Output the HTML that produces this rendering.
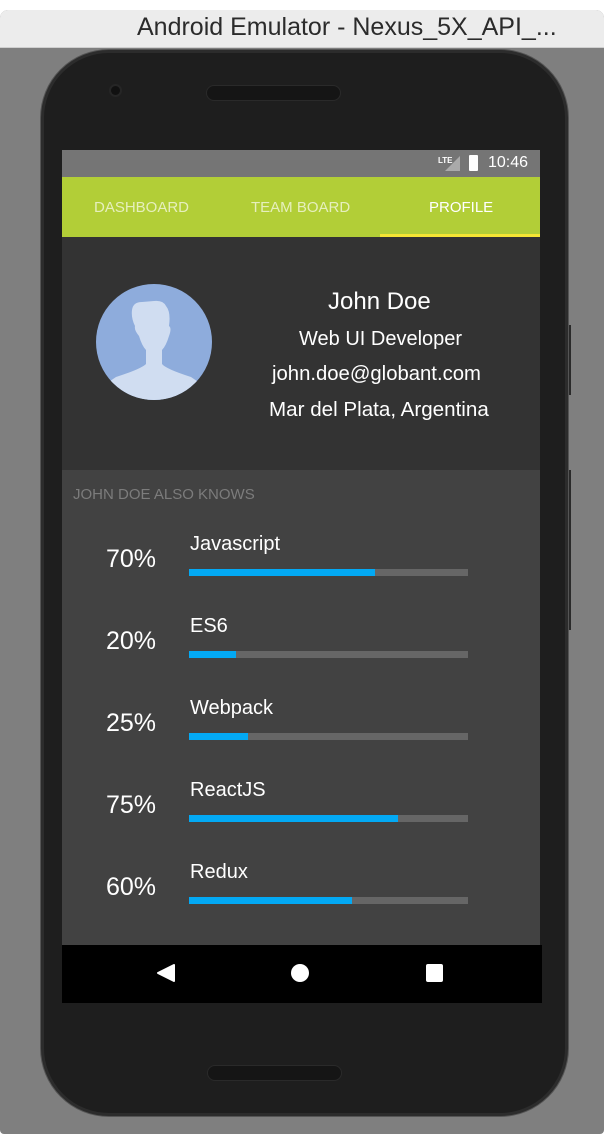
<!DOCTYPE html>
<html><head><meta charset="utf-8"><style>
*{margin:0;padding:0;box-sizing:border-box}
body{width:610px;height:1138px;background:#fff;position:relative;overflow:hidden;font-family:"Liberation Sans",sans-serif}
.abs{position:absolute}
.win{left:0;top:10px;width:604px;height:1124px;background:#7f7f7f;border-radius:8px 8px 4px 4px;overflow:hidden}
.title{left:0;top:10px;width:604px;height:38px;background:#ececec;border-radius:8px 8px 0 0;border-bottom:1px solid #cfcfcf}
.title span{position:absolute;left:137px;top:3px;font-size:25px;color:#2b2b2b;white-space:nowrap}
.phone{left:41px;top:50px;width:527px;height:1066px;background:#1e1e1e;border-radius:68px;border:3px solid #2c2c2c;box-shadow:0 0 0 1px #555}
.txt{color:#fff;white-space:nowrap}
.bar{left:189px;width:279px;height:7px;background:#666}
.bar i{display:block;height:7px;background:#03a9f4}
.pct{font-size:25px;color:#fff;left:106px}
.lbl{font-size:20px;color:#fff;left:190px}
</style></head><body>
<div class="abs win"></div>
<div class="abs title"><span>Android Emulator - Nexus_5X_API_...</span></div>
<div class="abs" style="left:568px;top:325px;width:3px;height:70px;background:#2a2a2a"></div>
<div class="abs" style="left:568px;top:470px;width:3px;height:160px;background:#2a2a2a"></div>
<div class="abs phone"></div>
<div class="abs" style="left:111px;top:86px;width:9px;height:9px;border-radius:50%;background:#111;box-shadow:0 0 0 2px #262626"></div>
<div class="abs" style="left:206px;top:85px;width:135px;height:16px;border-radius:8px;background:#151515;border:1px solid #2a2a2a"></div>
<div class="abs" style="left:207px;top:1065px;width:135px;height:16px;border-radius:8px;background:#151515;border:1px solid #2a2a2a"></div>
<!-- screen -->
<div class="abs" style="left:62px;top:150px;width:478px;height:27px;background:#757575"></div>
<div class="abs txt" style="left:438px;top:156px;font-size:8px;font-weight:bold">LTE</div>
<svg class="abs" style="left:444px;top:155px" width="18" height="16"><polygon points="16,1 16,16 1,16" fill="#aaa"/></svg>
<div class="abs" style="left:469px;top:155px;width:9px;height:16px;background:#fff;border-radius:1px"></div>
<div class="abs txt" style="left:488px;top:154px;font-size:16px">10:46</div>
<div class="abs" style="left:62px;top:177px;width:478px;height:60px;background:#b2ce37"></div>
<div class="abs txt" style="left:94px;top:199px;font-size:15px;color:#e6efbd">DASHBOARD</div>
<div class="abs txt" style="left:251px;top:199px;font-size:15px;color:#e6efbd">TEAM BOARD</div>
<div class="abs txt" style="left:429px;top:199px;font-size:15px">PROFILE</div>
<div class="abs" style="left:380px;top:234px;width:160px;height:3px;background:#f5e534"></div>
<div class="abs" style="left:62px;top:237px;width:478px;height:233px;background:#333"></div>
<svg class="abs" style="left:96px;top:284px" width="116" height="116" viewBox="0 0 116 116">
<defs><clipPath id="c"><circle cx="58" cy="58" r="58"/></clipPath></defs>
<circle cx="58" cy="58" r="58" fill="#8eacdc"/>
<g clip-path="url(#c)" fill="#d0ddf1">
<path d="M36 26 Q37 18 46 18 L58 17 Q67 16 70 22 Q75 28 73 42 Q76 44 73 52 Q70 62 66 66 L66 80 Q70 85 95 93 L120 110 L120 120 L-5 120 L-5 110 L20 93 Q45 85 50 80 L50 66 Q46 62 43 52 Q38 46 39 42 Q35 34 36 26 Z"/>
</g></svg>
<div class="abs txt" style="left:328px;top:288px;font-size:24px">John Doe</div>
<div class="abs txt" style="left:299px;top:328px;font-size:20px">Web UI Developer</div>
<div class="abs txt" style="left:272px;top:363px;font-size:20.3px">john.doe@globant.com</div>
<div class="abs txt" style="left:269px;top:398px;font-size:20.6px">Mar del Plata, Argentina</div>
<div class="abs" style="left:62px;top:470px;width:478px;height:475px;background:#424242"></div>
<div class="abs txt" style="left:73px;top:486px;font-size:15px;color:#7c7c7c">JOHN DOE ALSO KNOWS</div>

<div class="abs pct" style="top:545px">70%</div><div class="abs lbl" style="top:533px">Javascript</div><div class="abs bar" style="top:569px"><i style="width:186px"></i></div>
<div class="abs pct" style="top:627px">20%</div><div class="abs lbl" style="top:615px">ES6</div><div class="abs bar" style="top:651px"><i style="width:47px"></i></div>
<div class="abs pct" style="top:709px">25%</div><div class="abs lbl" style="top:697px">Webpack</div><div class="abs bar" style="top:733px"><i style="width:59px"></i></div>
<div class="abs pct" style="top:791px">75%</div><div class="abs lbl" style="top:779px">ReactJS</div><div class="abs bar" style="top:815px"><i style="width:209px"></i></div>
<div class="abs pct" style="top:873px">60%</div><div class="abs lbl" style="top:861px">Redux</div><div class="abs bar" style="top:897px"><i style="width:163px"></i></div>

<div class="abs" style="left:62px;top:945px;width:480px;height:58px;background:#000"></div>
<svg class="abs" style="left:156px;top:963px" width="20" height="20"><polygon points="2,10 18,2 18,18" fill="#fff" stroke="#fff" stroke-linejoin="round" stroke-width="2"/></svg>
<div class="abs" style="left:291px;top:964px;width:18px;height:18px;border-radius:50%;background:#fff"></div>
<div class="abs" style="left:426px;top:964px;width:17px;height:18px;border-radius:2px;background:#fff"></div>
</body></html>
